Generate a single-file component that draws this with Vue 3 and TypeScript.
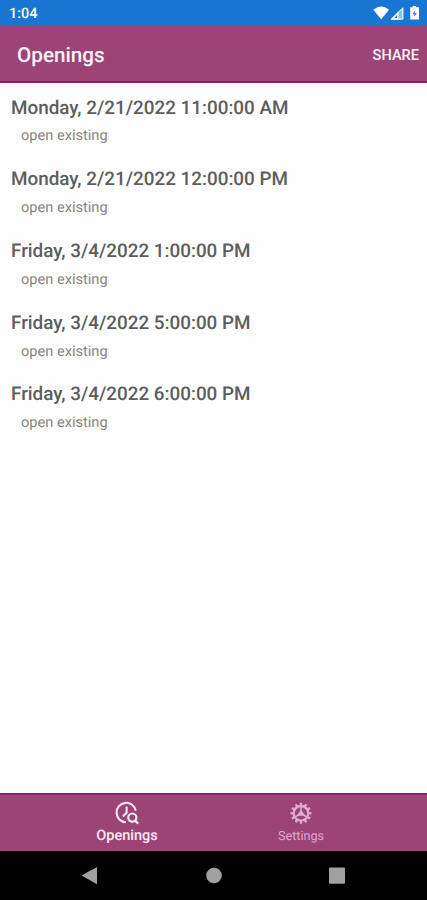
<script setup lang="ts">
interface Opening {
  time: string
  note: string
}

const openings: Opening[] = [
  { time: 'Monday, 2/21/2022 11:00:00 AM', note: 'open existing' },
  { time: 'Monday, 2/21/2022 12:00:00 PM', note: 'open existing' },
  { time: 'Friday, 3/4/2022 1:00:00 PM', note: 'open existing' },
  { time: 'Friday, 3/4/2022 5:00:00 PM', note: 'open existing' },
  { time: 'Friday, 3/4/2022 6:00:00 PM', note: 'open existing' },
]

const teeth: number[] = Array.from({ length: 12 }, (_, i) => i * 30)
</script>

<template>
  <div class="screen">
    <div class="status">
      <span class="clock">1:04</span>
      <svg class="signals" width="48" height="16" viewBox="0 0 48 16">
        <path d="M.3 4.7Q8.2 -1.9 16.1 4.7L8.2 14.2Z" fill="#fff" />
        <path d="M17.5 14.6L30.3 1.8V14.6Z" fill="#8fbdec" />
        <path d="M18.7 14.1L29.8 3V14.1Z" fill="none" stroke="#fff" />
        <path d="M17.5 14.6L25.5 6.6V14.6Z" fill="#fff" />
        <path d="M21.3 12.9L24.2 10V12.9Z" fill="#1976d2" />
        <path d="M39.8 1H43.2V2.2H46V14.5H37.2V2.2H39.8Z" fill="#fff" />
        <path d="M42 5.4L39.5 9.2H41.2V12L43.9 8H42Z" fill="#6375c9" />
      </svg>
    </div>
    <header class="toolbar">
      <h1>Openings</h1>
      <button class="share">SHARE</button>
    </header>
    <main class="list">
      <article v-for="item in openings" :key="item.time" class="opening">
        <h2>{{ item.time }}</h2>
        <p>{{ item.note }}</p>
      </article>
    </main>
    <nav class="tabs">
      <a class="tab active">
        <svg width="26" height="26" viewBox="0 0 26 26" fill="none" stroke="#ffe9f7">
          <path d="M12 22.2A9.7 9.7 0 1 1 21.8 10.8" stroke-width="2.1" />
          <path d="M12.6 6.5V12.8L8.9 16.5" stroke-width="2" />
          <circle cx="18.3" cy="17.6" r="4.1" stroke-width="2.2" />
          <path d="M20.8 20.2L24.2 23.6" stroke-width="2.3" />
        </svg>
        <span>Openings</span>
      </a>
      <a class="tab">
        <svg width="26" height="26" viewBox="0 0 26 26" fill="none" stroke="#e0acd0">
          <circle cx="13" cy="13.3" r="7.3" stroke-width="2.3" />
          <path v-for="angle in teeth" :key="angle" d="M13 2.8V5.8" stroke-width="2.3" :transform="`rotate(${angle} 13 13.3)`" />
          <path d="M13 6.5V12M13 13.3L7 17M13 13.3L19 17" stroke-width="1.5" />
          <path d="M13 9.3L17 15.7H9Z" fill="#e0acd0" stroke="none" />
        </svg>
        <span>Settings</span>
      </a>
    </nav>
    <div class="system">
      <svg width="427" height="49" viewBox="0 0 427 49" fill="#a1a1a1">
        <path d="M81.5 24.5L97 16V33.3Z" />
        <circle cx="214" cy="24.5" r="7.8" />
        <rect x="329" y="16.5" width="16" height="16.3" rx=".8" />
      </svg>
    </div>
  </div>
</template>

<style>
body {
  margin: 0;
}
</style>

<style scoped>
.screen {
  display: flex;
  flex-direction: column;
  width: 427px;
  height: 900px;
  overflow: hidden;
  background: #fefefe;
  font-family: Roboto, sans-serif;
  text-rendering: geometricPrecision;
}
.status {
  display: flex;
  justify-content: space-between;
  box-sizing: border-box;
  height: 26px;
  flex: none;
  padding: 5px 6px 0 9px;
  background: #1976d2;
  color: #fff;
}
.clock {
  font-size: 14.4px;
  font-weight: 500;
  line-height: 17px;
}
.toolbar {
  display: flex;
  align-items: center;
  justify-content: space-between;
  box-sizing: border-box;
  height: 57px;
  flex: none;
  padding: 0 8px 0 17px;
  background: #9b4475;
  border-bottom: 2px solid #88206b;
  color: #fff1fb;
}
h1 {
  margin: 5px 0 0;
  font-size: 20.7px;
  font-weight: 500;
  line-height: 24px;
}
.share {
  margin: 3px 0 0;
  padding: 0;
  border: 0;
  background: none;
  color: inherit;
  font: 500 14.6px/20px Roboto, sans-serif;
}
.list {
  flex: 1;
  padding-top: 12.6px;
}
.opening {
  height: 71.7px;
}
h2 {
  margin: 0;
  padding-left: 11px;
  color: #5d5d5d;
  font-size: 18.85px;
  font-weight: 500;
  line-height: 24px;
}
p {
  margin: 5.9px 0 0;
  padding-left: 21px;
  color: #858585;
  font-size: 14.6px;
  line-height: 20px;
}
.tabs {
  display: flex;
  box-sizing: border-box;
  height: 58px;
  flex: none;
  padding: 0 39px 0 40px;
  background: #9b4475;
  border-top: 2px solid #88206b;
}
.tab {
  display: flex;
  flex: 1;
  flex-direction: column;
  align-items: center;
  padding-top: 5px;
  color: #dca9cb;
  font-size: 12.6px;
  line-height: 18px;
}
.tab span {
  margin-top: 2px;
}
.active {
  color: #ffe9f7;
  font-size: 14.5px;
  font-weight: 500;
}
.active span {
  margin-top: 1px;
}
.system {
  height: 49px;
  flex: none;
  background: #000;
}
</style>
